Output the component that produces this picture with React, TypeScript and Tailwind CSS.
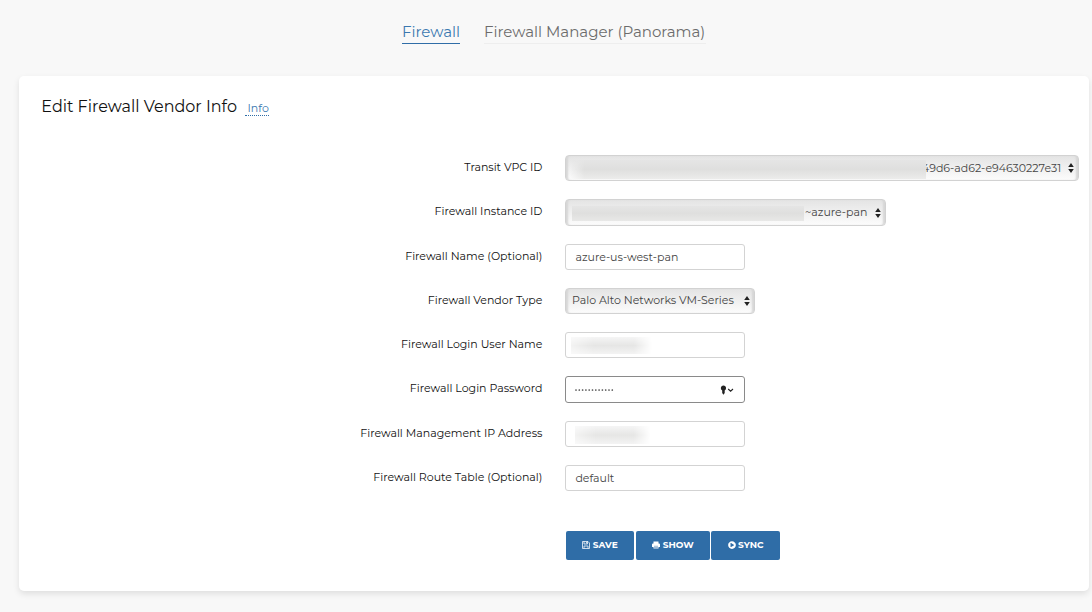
import type { ReactNode } from "react";
import { FaPlayCircle } from "react-icons/fa";

function Row({ label, height = "h-[44px]", children }: { label: string; height?: string; children: ReactNode }) {
  return (
    <div className={`flex items-start ${height}`}>
      <label className="w-[524px] shrink-0 pt-[4px] pr-[0.6px] text-right text-[11px] leading-4 whitespace-nowrap text-[#111]">
        {label}
      </label>
      <div className="ml-[22px]">{children}</div>
    </div>
  );
}

function Arrows() {
  return (
    <svg className="h-[10px] w-[6px] shrink-0" viewBox="0 0 6 10" fill="#222">
      <path d="M3 0 5.8 4H.2zM3 10 .2 6h5.6z" />
    </svg>
  );
}

function SaveIcon() {
  return (
    <svg className="h-[8px] w-[8px]" viewBox="0 0 16 16" fill="none" stroke="currentColor" strokeWidth="1.5">
      <path d="M1 1h11l3 3v11H1z" />
      <path d="M4 1v5h7V1M4 15v-5h8v5" />
      <path d="M9 2v3" />
    </svg>
  );
}

function PrintIcon() {
  return (
    <svg className="h-[8px] w-[8px]" viewBox="0 0 16 16" fill="currentColor">
      <path d="M3 1h10v4h1a2 2 0 0 1 2 2v5h-3v3H3v-3H0V7a2 2 0 0 1 2-2h1z" />
      <path d="M4 10.5h8M4 13.2h8" stroke="#2f6da7" strokeWidth="1" />
    </svg>
  );
}

function SelectBox({ size, children }: { size: string; children: ReactNode }) {
  return (
    <div
      className={`flex items-center overflow-hidden rounded-[4px] border border-[#d2d2d2] bg-linear-to-b from-[#e4e4e4] to-[#fcfcfc] pr-[4px] pl-[6px] text-[11px] whitespace-nowrap text-[#444] shadow-[inset_3px_0_2px_-1px_#d6d6d6,inset_-3px_0_2px_-1px_#d6d6d6] ${size}`}
    >
      {children}
    </div>
  );
}

function InputBox({ size = "h-[26px]", border = "border-[#d3d3d3]", children }: { size?: string; border?: string; children: ReactNode }) {
  return (
    <div className={`flex w-[180px] items-center rounded-[3px] border bg-white pl-[9.4px] text-[11px] text-[#444] ${border} ${size}`}>
      {children}
    </div>
  );
}

function Button({ width, children }: { width: string; children: ReactNode }) {
  return (
    <button className={`flex h-[29px] items-center justify-center gap-[2.5px] rounded-[2px] bg-[#2f6da7] pb-[2px] text-[9px] font-bold text-white ${width}`}>
      {children}
    </button>
  );
}

export default function App() {
  return (
    <div className="h-[612px] w-[1092px] overflow-hidden bg-[#f8f8f8] font-[Montserrat,Inter,sans-serif]">
      <nav className="flex h-[76px] pt-[21px] pl-[402px] text-[15px] leading-[22px] whitespace-nowrap">
        <a className="h-[23px] w-[58px] border-b border-[#2f6da7] text-[#3b78b0]">Firewall</a>
        <a className="ml-[24px] h-[23px] w-[222px] border-b border-[#eeeeee] text-[#6c6c6c]">Firewall Manager (Panorama)</a>
      </nav>
      <main className="ml-[19px] h-[515px] w-[1070px] rounded-[5px] bg-white shadow-[0_3px_6px_rgba(0,0,0,0.1)]">
        <header className="flex h-[79px] pt-[18px] pl-[22px] whitespace-nowrap">
          <h1 className="w-[204px] pt-px pl-[0.3px] text-[16px] leading-6 text-[#111]">Edit Firewall Vendor Info</h1>
          <a className="mt-[6px] h-[16px] w-[24px] border-b border-dotted border-[#2f6da7] pl-[2.5px] text-[11px] leading-4 text-[#3b78b0]">Info</a>
        </header>
        <form>
          <Row label="Transit VPC ID">
            <SelectBox size="h-[26px] w-[514px]">
              <div className="mt-[3px] -ml-[2px] h-[19px] w-[356px] shrink-0 bg-linear-to-b from-[#e5e5e5] via-[#dfdfde] to-[#ececeb] [mask-image:linear-gradient(to_right,transparent,black_14px)]" />
              <span className="-ml-[4px] [clip-path:inset(0_0_0_4px)]">49d6-ad62-e94630227e31</span>
              <span className="ml-auto flex"><Arrows /></span>
            </SelectBox>
          </Row>
          <Row label="Firewall Instance ID" height="h-[45px]">
            <SelectBox size="h-[27px] w-[321px]">
              <div className="mt-[2px] h-[15px] w-[232px] shrink-0 bg-linear-to-b from-[#e5e5e5] via-[#dfdfde] to-[#e8e8e7]" />
              <span className="ml-[1px]">~azure-pan</span>
              <span className="ml-auto flex"><Arrows /></span>
            </SelectBox>
          </Row>
          <Row label="Firewall Name (Optional)">
            <InputBox>azure-us-west-pan</InputBox>
          </Row>
          <Row label="Firewall Vendor Type">
            <SelectBox size="h-[26px] w-[190px]">
              <span className="pb-[2px]">Palo Alto Networks VM-Series</span>
              <span className="ml-auto flex"><Arrows /></span>
            </SelectBox>
          </Row>
          <Row label="Firewall Login User Name">
            <InputBox>
              <div className="mt-px -ml-1 h-[17px] w-[90px] bg-linear-to-b from-[#f5f5f5] via-[#e6e6e5] to-[#f3f3f3] [mask-image:linear-gradient(to_right,rgba(0,0,0,0.5),black_25%,black_70%,transparent_90%)]" />
            </InputBox>
          </Row>
          <Row label="Firewall Login Password" height="h-[45px]">
            <InputBox size="h-[27px]" border="border-[#8a8a8a]">
              <svg className="h-[2px] w-[40px]" viewBox="0 0 40 2" fill="#444">
                {Array.from({ length: 12 }, (_, i) => <circle key={i} cx={1 + i * 3.3} cy="1" r=".85" />)}
              </svg>
              <svg className="mr-[10px] ml-auto h-[10px] w-[14px]" viewBox="0 0 14 10">
                <path d="M3.5 .5a2.6 2.6 0 0 0-1.3 4.9V8l1.3 1.7L4.7 8V5.4A2.6 2.6 0 0 0 3.5.5z" fill="#222" />
                <path d="m8.2 4 2.4 2.2L13 4" fill="none" stroke="#222" strokeWidth="1.1" />
              </svg>
            </InputBox>
          </Row>
          <Row label="Firewall Management IP Address">
            <InputBox>
              <div className="mt-px h-[18px] w-[84px] bg-linear-to-b from-[#f5f5f5] via-[#e6e6e5] to-[#f3f3f3] [mask-image:linear-gradient(to_right,rgba(0,0,0,0.5),black_25%,black_70%,transparent_90%)]" />
            </InputBox>
          </Row>
          <Row label="Firewall Route Table (Optional)">
            <InputBox>default</InputBox>
          </Row>
          <div className="mt-[22px] ml-[547px] flex">
            <Button width="w-[68px]"><SaveIcon />SAVE</Button>
            <span className="w-[2px]" />
            <Button width="w-[74px]"><PrintIcon />SHOW</Button>
            <span className="w-[1px]" />
            <Button width="w-[69px]"><FaPlayCircle className="size-[8px]" />SYNC</Button>
          </div>
        </form>
      </main>
    </div>
  );
}
